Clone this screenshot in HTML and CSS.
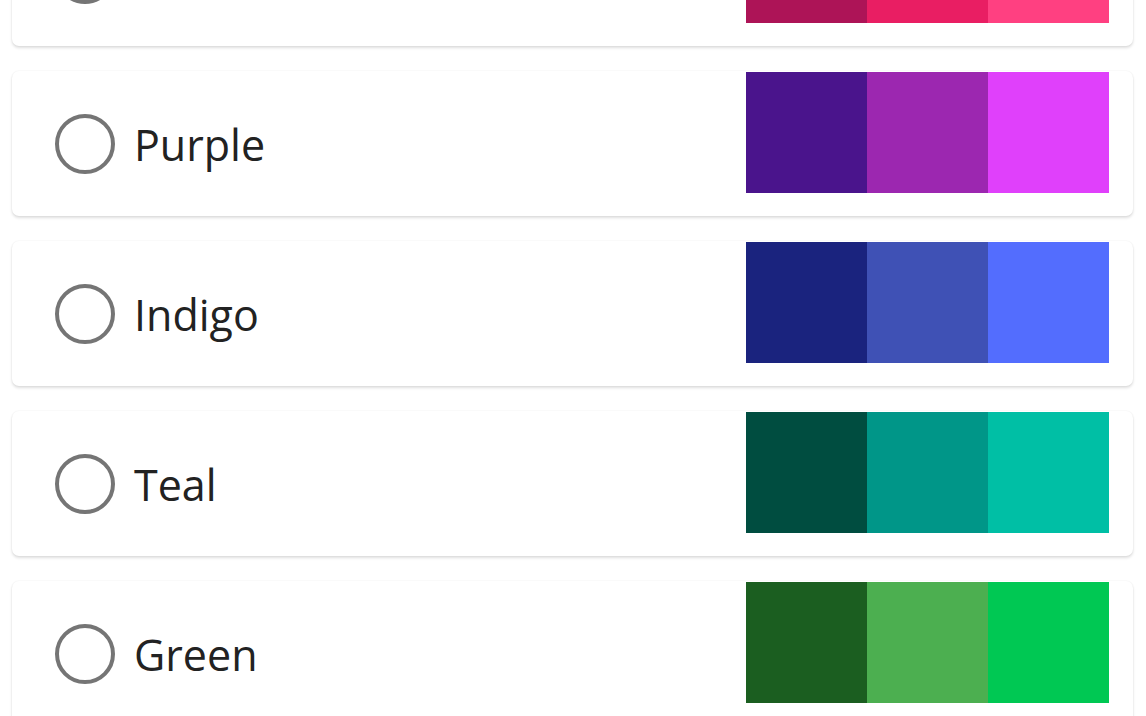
FILE: index.html
```html
<!DOCTYPE html>
<html>
<head>
<meta charset="utf-8">
<link rel="stylesheet" href="styles.css">
</head>
<body>
<div class="list">
  <div class="card">
    <span class="radio"></span><span class="label">Pink</span>
    <div class="swatches"><span class="sw pk1"></span><span class="sw pk2"></span><span class="sw pk3"></span></div>
  </div>
  <div class="card">
    <span class="radio"></span><span class="label">Purple</span>
    <div class="swatches"><span class="sw pu1"></span><span class="sw pu2"></span><span class="sw pu3"></span></div>
  </div>
  <div class="card">
    <span class="radio"></span><span class="label">Indigo</span>
    <div class="swatches"><span class="sw in1"></span><span class="sw in2"></span><span class="sw in3"></span></div>
  </div>
  <div class="card">
    <span class="radio"></span><span class="label">Teal</span>
    <div class="swatches"><span class="sw te1"></span><span class="sw te2"></span><span class="sw te3"></span></div>
  </div>
  <div class="card">
    <span class="radio"></span><span class="label">Green</span>
    <div class="swatches"><span class="sw gr1"></span><span class="sw gr2"></span><span class="sw gr3"></span></div>
  </div>
</div>
</body>
</html>
```
FILE: styles.css
```css
html, body {
  margin: 0;
  padding: 0;
  background: #ffffff;
  overflow: hidden;
}
body {
  font-family: "Open Sans", "Noto Sans", sans-serif;
}
.list {
  display: flex;
  flex-direction: column;
  gap: 25px;
  margin-top: -99px;
  padding: 0 13px 0 12px;
}
.card {
  display: flex;
  align-items: center;
  box-sizing: border-box;
  height: 145px;
  padding: 0 24px 0 43px;
  background: #fff;
  border-radius: 7px;
  box-shadow: 0 2px 3px rgba(0, 0, 0, 0.13), 0 0 2px rgba(0, 0, 0, 0.07);
}
.radio {
  width: 52px;
  height: 52px;
  border: 4px solid #757575;
  border-radius: 50%;
  flex: none;
}
.label {
  margin-left: 19px;
  font-size: 43px;
  color: #222;
  line-height: 1;
  position: relative;
  top: 1px;
}
.swatches {
  display: flex;
  margin-left: auto;
  align-self: flex-start;
  margin-top: 1px;
}
.sw {
  width: 121px;
  height: 121px;
}
.pk1 { background: #ad1457; }
.pk2 { background: #e91e63; }
.pk3 { background: #ff4081; }
.pu1 { background: #4a148c; }
.pu2 { background: #9c27b0; }
.pu3 { background: #e040fb; }
.in1 { background: #1a237e; }
.in2 { background: #3f51b5; }
.in3 { background: #536dfe; }
.te1 { background: #004d40; }
.te2 { background: #009688; }
.te3 { background: #00bfa5; }
.gr1 { background: #1b5e20; }
.gr2 { background: #4caf50; }
.gr3 { background: #00c853; }
```
